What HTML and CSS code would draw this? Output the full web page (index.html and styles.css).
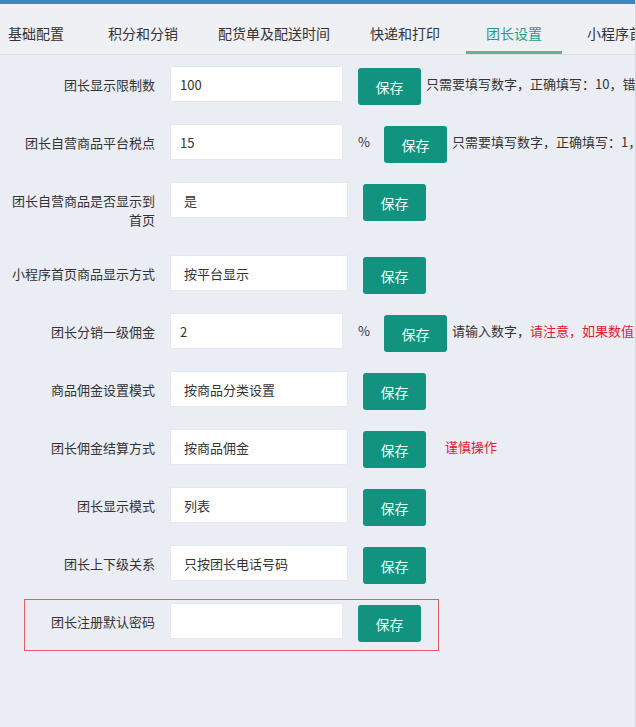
FILE: index.html
```html
<!DOCTYPE html>
<html lang="zh-CN">
<head>
<meta charset="UTF-8">
<meta name="viewport" content="width=device-width, initial-scale=1.0">
<title>团长设置</title>
<link rel="stylesheet" href="styles.css">
</head>
<body>
    <div class="topbar"></div>
    <div class="tabs">
        <div class="tab first">基础配置</div>
        <div class="tab">积分和分销</div>
        <div class="tab">配货单及配送时间</div>
        <div class="tab">快递和打印</div>
        <div class="tab active">团长设置</div>
        <div class="tab after">小程序首页设置</div>
    </div>

    <div class="form">
        <div class="row">
            <label class="label">团长显示限制数</label>
            <input class="field" type="text" value="100">
            <button class="save">保存</button>
            <span class="tip near">只需要填写数字，正确填写：10，错误填写：10个</span>
        </div>
        <div class="row">
            <label class="label">团长自营商品平台税点</label>
            <input class="field" type="text" value="15">
            <span class="unit">%</span>
            <button class="save">保存</button>
            <span class="tip near">只需要填写数字，正确填写：1，错误填写：1%</span>
        </div>
        <div class="row">
            <label class="label">团长自营商品是否显示到首页</label>
            <select class="field wide"><option>是</option></select>
            <button class="save">保存</button>
        </div>
        <div class="row">
            <label class="label">小程序首页商品显示方式</label>
            <select class="field wide"><option>按平台显示</option></select>
            <button class="save">保存</button>
        </div>
        <div class="row">
            <label class="label">团长分销一级佣金</label>
            <input class="field" type="text" value="2">
            <span class="unit">%</span>
            <button class="save">保存</button>
            <span class="tip near">请输入数字，<span class="warn">请注意，如果数值为0则不分佣</span></span>
        </div>
        <div class="row">
            <label class="label">商品佣金设置模式</label>
            <select class="field wide"><option>按商品分类设置</option></select>
            <button class="save">保存</button>
        </div>
        <div class="row">
            <label class="label">团长佣金结算方式</label>
            <select class="field wide"><option>按商品佣金</option></select>
            <button class="save">保存</button>
            <span class="tip warn">谨慎操作</span>
        </div>
        <div class="row">
            <label class="label">团长显示模式</label>
            <select class="field wide"><option>列表</option></select>
            <button class="save">保存</button>
        </div>
        <div class="row">
            <label class="label">团长上下级关系</label>
            <select class="field wide"><option>只按团长电话号码</option></select>
            <button class="save">保存</button>
        </div>
        <div class="row marked">
            <label class="label">团长注册默认密码</label>
            <input class="field" type="text" value="">
            <button class="save">保存</button>
        </div>
    </div>
</body>
</html>
```

FILE: styles.css
```css
body {
    margin: 0;
    background-color: #ebedf4;
    font-family: "Microsoft YaHei", "Noto Sans CJK SC", "Noto Sans", sans-serif;
    color: #333;
    overflow: hidden;
    height: 727px;
    border-right: 1px solid #d6d8de;
    box-sizing: border-box;
}

.topbar {
    height: 4px;
    background-color: #3e88c2;
}

.tabs {
    display: flex;
    height: 51px;
    background-color: #eef0f4;
    border-bottom: 1px solid #dcdfe5;
    box-sizing: border-box;
    white-space: nowrap;
    overflow: hidden;
}
.tab {
    height: 50px;
    box-sizing: border-box;
    padding: 19px 20px 0;
    line-height: 20px;
    font-size: 14px;
    color: #333;
    border-bottom: 3px solid transparent;
    flex-shrink: 0;
}
.tab.first {
    padding-left: 8px;
    padding-right: 24px;
}
.tab.active {
    margin-left: 6px;
    color: #1f9c8c;
    border-bottom-color: #66b48e;
}
.tab.after {
    padding-left: 25px;
}

.form {
    padding-top: 11px;
}
.row {
    display: flex;
    align-items: flex-start;
    height: 40px;
    margin-bottom: 18px;
    white-space: nowrap;
    font-size: 13px;
}
.label {
    width: 145px;
    margin-left: 10px;
    padding: 9px 0 8px;
    line-height: 19px;
    text-align: right;
    white-space: normal;
    flex-shrink: 0;
}
.row:nth-child(3) {
    height: 55px;
}
.field {
    margin-left: 15px;
    width: 173px;
    height: 36px;
    box-sizing: border-box;
    border: 1px solid #e6e8ee;
    background-color: #fff;
    padding: 0 9px;
    font-family: inherit;
    font-size: 13px;
    color: #333;
    outline: none;
    flex-shrink: 0;
}
select.field {
    -webkit-appearance: none;
    appearance: none;
    border-radius: 0;
    padding-left: 13px;
}
.field.wide {
    width: 178px;
}
.unit {
    margin-left: 15px;
    width: 10px;
    line-height: 36px;
}
.save {
    margin: 2px 0 0 15px;
    width: 63px;
    height: 37px;
    border: none;
    border-radius: 3px;
    background-color: #11937f;
    color: #e9fff8;
    font-family: inherit;
    font-size: 14px;
    cursor: pointer;
    flex-shrink: 0;
}
.unit + .save {
    margin-left: 16px;
}
.tip {
    line-height: 36px;
    margin-left: 19px;
}
.tip.near {
    margin-left: 5px;
}
.warn {
    color: #e8162e;
}

.row.marked {
    margin-top: -4px;
    margin-left: 24px;
    width: 415px;
    height: auto;
    padding: 3px 0 8px;
    border: 1px solid #e05c67;
    box-sizing: border-box;
}
.row.marked .label {
    width: 120px;
}
```
